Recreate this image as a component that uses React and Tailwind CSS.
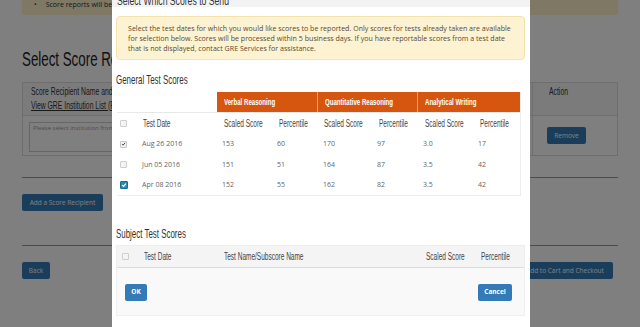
import React from "react";

function N({ className = "", children }) {
  return (
    <span className={`inline-block origin-left scale-x-[0.65] whitespace-nowrap font-['Liberation_Sans',Arial,sans-serif] ${className}`}>
      {children}
    </span>
  );
}

function Box({ state }) {
  if (state === "checked") {
    return (
      <span className="flex h-[7px] w-[7px] items-center justify-center rounded-[1px] border border-[#c8c8c8] bg-[#f2f2f2]">
        <svg viewBox="0 0 10 10" className="h-[6px] w-[6px]">
          <path d="M2 5.2 L4.2 7.4 L8.2 2.6" fill="none" stroke="#333" strokeWidth="1.8" />
        </svg>
      </span>
    );
  }
  if (state === "blue") {
    return (
      <span className="flex h-[8px] w-[8px] items-center justify-center rounded-[1px] border border-[#1d6b8c] bg-[#2b8bb0]">
        <svg viewBox="0 0 10 10" className="h-[6px] w-[6px]">
          <path d="M2 5.2 L4.2 7.4 L8.2 2.6" fill="none" stroke="#fff" strokeWidth="1.8" />
        </svg>
      </span>
    );
  }
  return <span className="block h-[7px] w-[7px] rounded-[1px] border border-[#cfcfcf] bg-[#f4f4f4]" />;
}

const cols = "grid grid-cols-[20px_80px_55px_46px_54px_46px_55px_47px]";

const rows = [
  { s: "checked", d: "Aug 26 2016", v: ["153", "60", "170", "97", "3.0", "17"] },
  { s: "none", d: "Jun 05 2016", v: ["151", "51", "164", "87", "3.5", "42"] },
  { s: "blue", d: "Apr 08 2016", v: ["152", "55", "162", "82", "3.5", "42"] },
];

const btn = "flex h-[17px] items-center justify-center rounded-[2px] bg-[#337ab7] text-[6.5px] text-white";

export default function App() {
  return (
    <div className="relative h-[327px] w-[640px] overflow-hidden bg-white font-['Open_Sans',sans-serif]">
      {/* Background page */}
      <div className="flex flex-col px-[22px]">
        <div className="flex h-[15px] items-start rounded-b-[3px] bg-[#fcf0c8] pl-[12px] text-[7px] leading-[9px] text-[#333]">
          <span className="mr-[9px]">•</span>
          <span>Score reports will be sent to the institutions you select</span>
        </div>
        <div className="mt-[32px] h-[24px] leading-[24px] text-[#222]">
          <N className="text-[20.5px]">Select Score Recipients</N>
        </div>
        <div className="mt-[11px] flex h-[74px] flex-col border border-[#ddd]">
          <div className="flex h-[33px] border-b border-[#ddd] bg-[#f7f7f7] text-[10.5px] leading-[14px] text-[#333]">
            <div className="flex flex-1 flex-col pl-[8px] pt-[1px]">
              <N>Score Recipient Name and Code</N>
              <N className="underline">View GRE Institution List (PDF)</N>
            </div>
            <div className="w-[85px] border-l border-[#ddd] pl-[16px] pt-[1px]">
              <N>Action</N>
            </div>
          </div>
          <div className="flex flex-1">
            <div className="flex-1 pl-[6px] pt-[6px]">
              <div className="h-[30px] w-[300px] border border-[#ccc] bg-white pl-[3px] text-[6px] leading-[10px] text-[#999]">
                Please select institution from the list
              </div>
            </div>
            <div className="w-[85px] border-l border-[#ddd] pl-[14px] pt-[11px]">
              <div className={`${btn} w-[39px]`}>Remove</div>
            </div>
          </div>
        </div>
        <div className="mt-[21px] border-t border-[#999]" />
        <div className="mt-[16px] flex">
          <div className={`${btn} w-[81px]`}>Add a Score Recipient</div>
        </div>
        <div className="mt-[34px] border-t border-[#999]" />
        <div className="mt-[16px] flex justify-between pr-[5px]">
          <div className={`${btn} w-[28px]`}>Back</div>
          <div className={`${btn} w-[96px]`}>Add to Cart and Checkout</div>
        </div>
      </div>

      {/* Overlay */}
      <div className="absolute inset-0 bg-black/50" />

      {/* Modal */}
      <div className="absolute left-[112px] top-0 flex h-[327px] w-[418px] flex-col bg-white">
        <div className="h-[7px] overflow-hidden bg-[#f3f3f3] pl-[5px]">
          <div className="mt-[-8px] h-[14px] leading-[14px] text-[#333]">
            <N className="text-[13.3px]">Select Which Scores to Send</N>
          </div>
        </div>
        <div className="ml-[4px] mr-[5px] mt-[9px] h-[44px] rounded-[4px] border border-[#f3e3ad] bg-[#fdf3d3] pl-[11px] pt-[6px] text-[7.1px] leading-[10px] whitespace-nowrap text-[#5b4a2c]">
          Select the test dates for which you would like scores to be reported. Only scores for tests already taken are available
          <br />
          for selection below. Scores will be processed within 5 business days. If you have reportable scores from a test date
          <br />
          that is not displayed, contact GRE Services for assistance.
        </div>
        <div className="ml-[4px] mt-[11px] h-[15px] leading-[15px] text-[#333]">
          <N className="text-[12.2px]">General Test Scores</N>
        </div>

        {/* General table */}
        <div className="ml-[5px] mt-[6px] w-[404px] border-r border-[#eee]">
          <div className={`${cols} h-[21px] border-b border-[#e8e8e8] text-white`}>
            <div className="col-span-2" />
            <div className="col-span-2 flex items-center border-r border-[#f0a070] bg-[#d6560f] pl-[7px]">
              <N className="text-[9.4px] font-bold">Verbal Reasoning</N>
            </div>
            <div className="col-span-2 flex items-center border-r border-[#f0a070] bg-[#d6560f] pl-[7px]">
              <N className="text-[9.4px] font-bold">Quantitative Reasoning</N>
            </div>
            <div className="col-span-2 flex items-center bg-[#d6560f] pl-[7px]">
              <N className="text-[9.4px] font-bold">Analytical Writing</N>
            </div>
          </div>
          <div className={`${cols} h-[21px] items-center text-[10px] text-[#444]`}>
            <div className="pl-[3px]"><Box state="none" /></div>
            <div className="pl-[6px]"><N>Test Date</N></div>
            <div className="pl-[7px]"><N>Scaled Score</N></div>
            <div className="pl-[7px]"><N>Percentile</N></div>
            <div className="pl-[6px]"><N>Scaled Score</N></div>
            <div className="pl-[7px]"><N>Percentile</N></div>
            <div className="pl-[7px]"><N>Scaled Score</N></div>
            <div className="pl-[7px]"><N>Percentile</N></div>
          </div>
          {rows.map((r, i) => (
            <div key={i} className={`${cols} h-[20.5px] items-center text-[7px] text-[#666] ${i === 2 ? "border-b border-[#eee]" : ""}`}>
              <div className="pl-[3px]"><Box state={r.s} /></div>
              <div className="pl-[5px]">{r.d}</div>
              {r.v.map((v, j) => (
                <div key={j} className="pl-[5px]">{v}</div>
              ))}
            </div>
          ))}
        </div>

        <div className="ml-[4px] mt-[29px] h-[15px] leading-[15px] text-[#333]">
          <N className="text-[12.2px]">Subject Test Scores</N>
        </div>

        {/* Subject table + footer */}
        <div className="ml-[4px] mt-[5px] flex h-[71px] w-[409px] flex-col border border-[#efefef] bg-[#f9f9f9]">
          <div className={`${cols} h-[22px] items-center border-b border-[#ddd] bg-[#f4f4f4] text-[10px] text-[#444]`}>
            <div className="pl-[5px]"><Box state="none" /></div>
            <div className="pl-[7px]"><N>Test Date</N></div>
            <div className="col-span-4 pl-[7px]"><N>Test Name/Subscore Name</N></div>
            <div className="pl-[8px]"><N>Scaled Score</N></div>
            <div className="pl-[8px]"><N>Percentile</N></div>
          </div>
          <div className="flex flex-1 items-start justify-between pl-[8px] pr-[12px] pt-[16px]">
            <div className={`${btn} w-[22px] font-bold`}>OK</div>
            <div className={`${btn} w-[34px] font-bold`}>Cancel</div>
          </div>
        </div>
      </div>
    </div>
  );
}
